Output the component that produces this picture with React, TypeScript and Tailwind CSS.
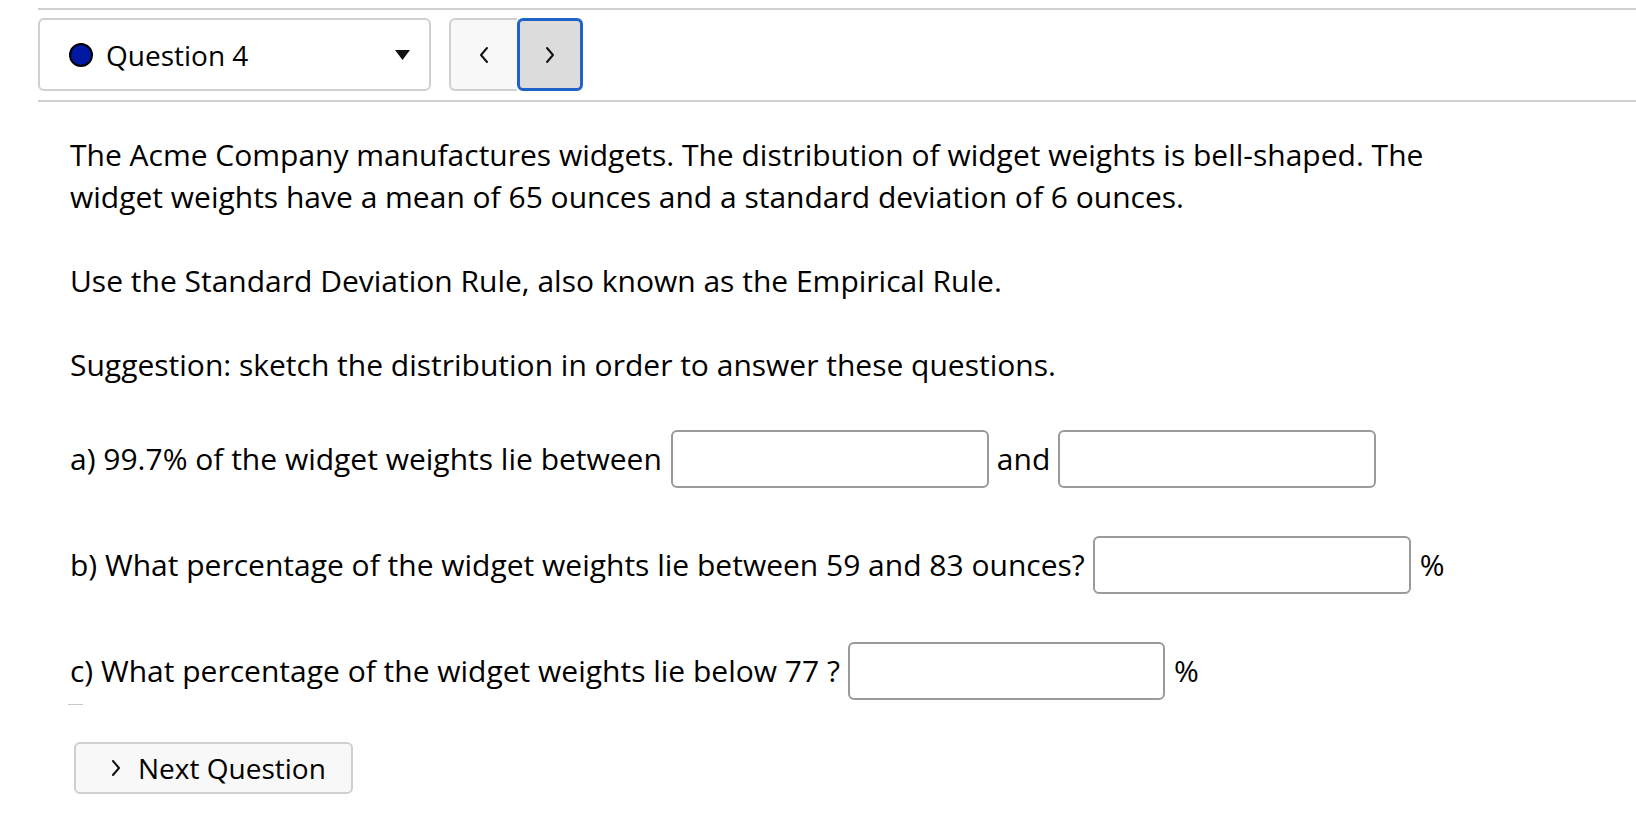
import type { ReactNode } from 'react'

function Field({ className = '' }: { className?: string }) {
  return (
    <input
      type="text"
      className={`h-[58px] rounded-[6px] border-2 border-[#9a9a9a] bg-white px-2 outline-none ${className}`}
    />
  )
}

function Row({ children }: { children: ReactNode }) {
  return <div className="flex items-center gap-[8px] h-[58px]">{children}</div>
}

function Chevron({ dir }: { dir: 'left' | 'right' }) {
  return (
    <svg width="12" height="18" viewBox="0 0 12 18" fill="none">
      <path
        d={dir === 'left' ? 'M9 2 L3 9 L9 16' : 'M3 2 L9 9 L3 16'}
        stroke="#111"
        strokeWidth="2"
        strokeLinecap="round"
        strokeLinejoin="round"
      />
    </svg>
  )
}

export default function App() {
  return (
    <div
      className="min-h-screen bg-white text-black"
      style={{ fontFamily: '"Open Sans", "Noto Sans", sans-serif' }}
    >
      <div className="pt-2 pl-[38px]">
        <div className="h-[2px] bg-[#d0d0d0]" />

        <div className="flex items-center gap-[18px] mt-[8px]">
          <div className="w-[393px] h-[73px] rounded-[6px] border-2 border-[#d0d0d0] bg-white flex items-center pl-[29px] pr-[19px]">
            <span className="w-[24px] h-[24px] rounded-full bg-[#0018a2] border-2 border-black shrink-0" />
            <span className="ml-[13px] text-[28px] leading-none flex-1">Question 4</span>
            <svg width="15" height="10" viewBox="0 0 15 10">
              <path d="M0 0 H15 L7.5 10 Z" fill="#111" />
            </svg>
          </div>
          <div className="flex h-[73px]">
            <button className="w-[68px] h-full rounded-l-[6px] border-2 border-r-0 border-[#d0d0d0] bg-[#f8f8f8] flex items-center justify-center">
              <Chevron dir="left" />
            </button>
            <button className="w-[66px] h-full rounded-[6px] border-[3px] border-[#1f63c9] bg-[#dcdcdc] flex items-center justify-center">
              <Chevron dir="right" />
            </button>
          </div>
        </div>

        <div className="h-[2px] bg-[#d0d0d0] mt-[9px]" />
      </div>

      <div className="pl-[70px] pt-[32px] text-[30px] leading-[42px]">
        <p className="max-w-[1400px]">
          The Acme Company manufactures widgets. The distribution of widget weights is bell-shaped. The widget weights have a mean of 65 ounces and a standard deviation of 6 ounces.
        </p>
        <p className="mt-[42px]">Use the Standard Deviation Rule, also known as the Empirical Rule.</p>
        <p className="mt-[42px]">Suggestion: sketch the distribution in order to answer these questions.</p>

        <div className="mt-[44px] flex flex-col gap-[48px]">
          <Row>
            <span className="mr-[1px]">a) 99.7% of the widget weights lie between</span>
            <Field className="w-[318px]" />
            <span>and</span>
            <Field className="w-[318px]" />
          </Row>
          <Row>
            <span>b) What percentage of the widget weights lie between 59 and 83 ounces?</span>
            <Field className="w-[318px]" />
            <span className="ml-[1px]">%</span>
          </Row>
          <Row>
            <span>c) What percentage of the widget weights lie below 77 ?</span>
            <Field className="w-[317px]" />
            <span className="ml-[1px]">%</span>
          </Row>
        </div>

        <div className="w-[15px] h-px bg-[#c8c8c8] -ml-[2px] mt-[4px]" />

        <button className="mt-[37px] ml-[4px] w-[279px] h-[52px] rounded-[6px] border-2 border-[#cfcfcf] bg-[#f8f8f8] flex items-center pl-[34px] gap-[16px] text-[28px]">
          <svg width="12" height="18" viewBox="0 0 12 18" fill="none">
            <path d="M3 2 L9 9 L3 16" stroke="#111" strokeWidth="2" strokeLinecap="round" strokeLinejoin="round" />
          </svg>
          <span>Next Question</span>
        </button>
      </div>
    </div>
  )
}
